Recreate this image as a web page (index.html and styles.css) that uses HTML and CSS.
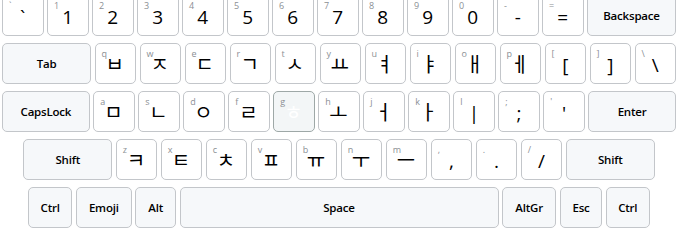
FILE: index.html
```html
<!DOCTYPE html>
<html lang="ko">
<head>
  <meta charset="UTF-8">
  <title>Keyboard</title>
  <link rel="stylesheet" href="styles.css">
</head>
<body>

<div class="keyboard">
  <div class="row">
    <div class="key"><span class="sub">`</span><span class="main">`</span></div>
    <div class="key"><span class="sub">1</span><span class="main">1</span></div>
    <div class="key"><span class="sub">2</span><span class="main">2</span></div>
    <div class="key"><span class="sub">3</span><span class="main">3</span></div>
    <div class="key"><span class="sub">4</span><span class="main">4</span></div>
    <div class="key"><span class="sub">5</span><span class="main">5</span></div>
    <div class="key"><span class="sub">6</span><span class="main">6</span></div>
    <div class="key"><span class="sub">7</span><span class="main">7</span></div>
    <div class="key"><span class="sub">8</span><span class="main">8</span></div>
    <div class="key"><span class="sub">9</span><span class="main">9</span></div>
    <div class="key"><span class="sub">0</span><span class="main">0</span></div>
    <div class="key"><span class="sub">-</span><span class="main">-</span></div>
    <div class="key"><span class="sub">=</span><span class="main">=</span></div>
    <div class="key fn wide">Backspace</div>
  </div>

  <div class="row">
    <div class="key fn wide">Tab</div>
    <div class="key"><span class="sub">q</span><span class="main ko">ㅂ</span></div>
    <div class="key"><span class="sub">w</span><span class="main ko">ㅈ</span></div>
    <div class="key"><span class="sub">e</span><span class="main ko">ㄷ</span></div>
    <div class="key"><span class="sub">r</span><span class="main ko">ㄱ</span></div>
    <div class="key"><span class="sub">t</span><span class="main ko">ㅅ</span></div>
    <div class="key"><span class="sub">y</span><span class="main ko">ㅛ</span></div>
    <div class="key"><span class="sub">u</span><span class="main ko">ㅕ</span></div>
    <div class="key"><span class="sub">i</span><span class="main ko">ㅑ</span></div>
    <div class="key"><span class="sub">o</span><span class="main ko">ㅐ</span></div>
    <div class="key"><span class="sub">p</span><span class="main ko">ㅔ</span></div>
    <div class="key"><span class="sub">[</span><span class="main">[</span></div>
    <div class="key"><span class="sub">]</span><span class="main">]</span></div>
    <div class="key"><span class="sub">\</span><span class="main">\</span></div>
  </div>

  <div class="row">
    <div class="key fn caps">CapsLock</div>
    <div class="key"><span class="sub">a</span><span class="main ko">ㅁ</span></div>
    <div class="key"><span class="sub">s</span><span class="main ko">ㄴ</span></div>
    <div class="key"><span class="sub">d</span><span class="main ko">ㅇ</span></div>
    <div class="key"><span class="sub">f</span><span class="main ko">ㄹ</span></div>
    <div class="key active"><span class="sub">g</span><span class="main ko">ㅎ</span></div>
    <div class="key"><span class="sub">h</span><span class="main ko">ㅗ</span></div>
    <div class="key"><span class="sub">j</span><span class="main ko">ㅓ</span></div>
    <div class="key"><span class="sub">k</span><span class="main ko">ㅏ</span></div>
    <div class="key"><span class="sub">l</span><span class="main">|</span></div>
    <div class="key"><span class="sub">;</span><span class="main">;</span></div>
    <div class="key"><span class="sub">'</span><span class="main">'</span></div>
    <div class="key fn caps">Enter</div>
  </div>

  <div class="row">
    <div class="key fn wide">Shift</div>
    <div class="key"><span class="sub">z</span><span class="main ko">ㅋ</span></div>
    <div class="key"><span class="sub">x</span><span class="main ko">ㅌ</span></div>
    <div class="key"><span class="sub">c</span><span class="main ko">ㅊ</span></div>
    <div class="key"><span class="sub">v</span><span class="main ko">ㅍ</span></div>
    <div class="key"><span class="sub">b</span><span class="main ko">ㅠ</span></div>
    <div class="key"><span class="sub">n</span><span class="main ko">ㅜ</span></div>
    <div class="key"><span class="sub">m</span><span class="main ko">ㅡ</span></div>
    <div class="key"><span class="sub">,</span><span class="main">,</span></div>
    <div class="key"><span class="sub">.</span><span class="main">.</span></div>
    <div class="key"><span class="sub">/</span><span class="main">/</span></div>
    <div class="key fn wide">Shift</div>
  </div>

  <div class="row">
    <div class="key fn ctrl">Ctrl</div>
    <div class="key fn emoji">Emoji</div>
    <div class="key fn alt">Alt</div>
    <div class="key fn space">Space</div>
    <div class="key fn altgr">AltGr</div>
    <div class="key fn esc">Esc</div>
    <div class="key fn ctrl">Ctrl</div>
  </div>
</div>

</body>
</html>
```

FILE: styles.css
```css
body {
  margin: 0;
  background: #fff;
  font-family: "Open Sans", "Noto Sans", sans-serif;
}

.keyboard {
  margin-top: -5px;
  display: flex;
  flex-direction: column;
  gap: 7px;
}

.row {
  display: flex;
  justify-content: center;
  gap: 3.5px;
}

.key {
  position: relative;
  box-sizing: border-box;
  width: 41.5px;
  height: 41px;
  flex: none;
  display: flex;
  align-items: center;
  justify-content: center;
  background: #fff;
  border: 1px solid #c3c6ca;
  border-radius: 5px;
  color: #000;
}

.key .sub {
  position: absolute;
  top: 5px;
  left: 6px;
  font-size: 9px;
  line-height: 9px;
  color: #8b8f94;
}

.key .main {
  font-size: 19px;
  line-height: 22px;
  margin-top: 2px;
}

.key .main.ko {
  font-family: "Noto Sans CJK KR", sans-serif;
  font-size: 20px;
  margin-left: -1px;
  margin-top: 1px;
}

.key.fn {
  background: #f6f8fa;
  font-size: 11.5px;
  font-weight: 600;
  letter-spacing: -0.2px;
}

.key.wide { width: 89px; }
.key.caps { width: 87.7px; }
.key.ctrl { width: 44.2px; }
.key.emoji { width: 56px; }
.key.alt { width: 40.7px; }
.key.space { width: 319px; }
.key.altgr { width: 54.4px; }
.key.esc { width: 42.3px; }

.key.active {
  background: #f3f6f7;
  border-color: #9ea8a7;
}

.key.active .main {
  color: #fff;
}
```
